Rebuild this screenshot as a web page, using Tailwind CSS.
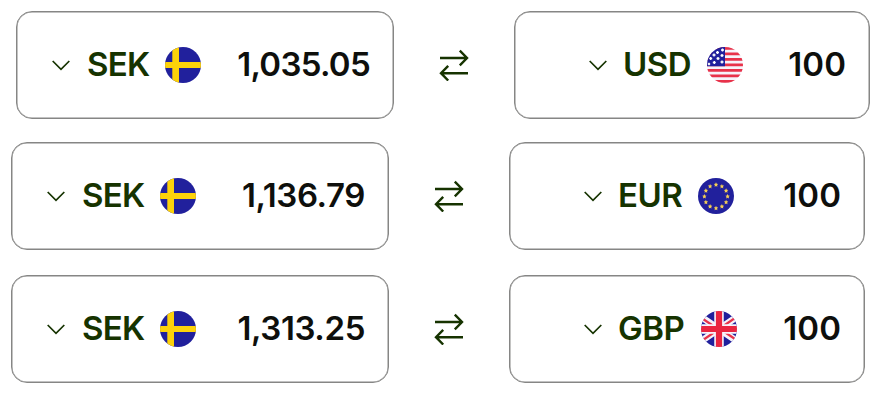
<!DOCTYPE html>
<html lang="en">
<head>
<meta charset="utf-8">
<title>Currency converter</title>
<script src="https://cdn.jsdelivr.net/npm/@tailwindcss/browser@4"></script>
</head>
<body class="bg-white font-['Inter',sans-serif] font-semibold text-[33px] leading-10 tracking-[-0.7px] text-[#0e0f0c]">
<svg class="hidden">
  <symbol id="chevron" viewBox="0 0 18 11"><path d="M.7 1 9 9.4 17.3 1" fill="none" stroke="#163300" stroke-width="1.700"/></symbol>
  <symbol id="swap" viewBox="0 0 30 32"><path d="M1 9H27.500M20.800 1.700 28 9 20.800 16.300M29 24.200H2.500M9.200 16.900 2 24.200 9.200 31.500" fill="none" stroke="#163300" stroke-width="2.400"/></symbol>
  <symbol id="se" viewBox="0 0 36 36"><path fill="#21209c" d="M0 0h36v36H0z"/><path fill="#fdd20a" d="M7.300 0h6.700v36H7.300zM0 15h36v6H0z"/></symbol>
  <symbol id="us" viewBox="0 0 36 36"><path fill="#f6f3fa" d="M0 0h36v36H0z"/><path d="M0 1.400h36M0 6.900h36M0 12.400h36M0 17.900h36M0 23.400h36M0 28.900h36M0 34.400h36" stroke="#e8324a" stroke-width="2.800"/><path fill="#21209c" d="M0 0h18v19.300H0z"/><path d="M9 5.500h3M10.500 4v3M14 3h3M15.500 1.500v3M5.500 8h3M7 6.500v3M13.500 8.500h3M15 7v3M2.200 11.500h3M3.700 10v3M9.500 11.500h3M11 10v3M5.800 15.500h3M7.300 14v3M13.500 15h3M15 13.500v3M.8 17h2.400M2 15.800v2.400" stroke="#fff" stroke-width="1.400"/></symbol>
  <symbol id="eu" viewBox="0 0 36 36"><path d="M0 0h36v36H0z" fill="#21209c"/><g fill="#f5cf55">
    <path id="star" d="m18 4.300.7 1.500 1.500.2-1.100 1.100.3 1.700-1.400-.8-1.400.8.3-1.700L15.800 6l1.500-.2z"/>
    <use href="#star" x="5.900" y="1.600"/><use href="#star" x="10.100" y="5.900"/><use href="#star" x="11.600" y="11.700"/><use href="#star" x="10.100" y="17.500"/><use href="#star" x="5.900" y="21.800"/><use href="#star" y="23.400"/><use href="#star" x="-5.900" y="21.800"/><use href="#star" x="-10.100" y="17.500"/><use href="#star" x="-11.600" y="11.700"/><use href="#star" x="-10.100" y="5.900"/><use href="#star" x="-5.900" y="1.600"/></g></symbol>
  <symbol id="gb" viewBox="0 0 36 36"><path fill="#21209c" d="M0 0h36v36H0z"/><path d="m-4 3 44 30M-4 33 40 3" stroke="#f6f3fa" stroke-width="6.500"/><path d="M-4 3.800 18 18.800M18 18 40 3M40 32.200 18 17.200M18 18-4 33" stroke="#e8324a" stroke-width="2.300"/><path d="M18 0v36M0 18h36" stroke="#f6f3fa" stroke-width="9.500"/><path d="M18 0v36M0 18h36" stroke="#ea2540" stroke-width="6.200"/></symbol>
</svg>
<main class="flex flex-col pt-[11px]">
  <section class="flex items-center ml-4 mb-[23px]">
    <div class="flex items-center w-[378px] h-[108px] shrink-0 rounded-[16px] border border-[#868685] shadow-[inset_0_0_0_0.500px_#868685] pl-[35px] pr-[23px]">
      <svg class="w-[18px] h-[11px]"><use href="#chevron"/></svg>
      <span class="ml-[17px] w-[78px] pb-0.5 text-[#163300]">SEK</span>
      <svg class="size-9 rounded-full"><use href="#se"/></svg>
      <span class="ml-auto pb-0.5">1,035.05</span>
    </div>
    <svg class="w-[30px] h-8 mx-[45px] shrink-0"><use href="#swap"/></svg>
    <div class="flex items-center w-[356px] h-[108px] shrink-0 rounded-[16px] border border-[#868685] shadow-[inset_0_0_0_0.500px_#868685] pl-[74px] pr-[23px]">
      <svg class="w-[18px] h-[11px]"><use href="#chevron"/></svg>
      <span class="ml-4 w-[84px] pb-0.5 tracking-[-0.5px] text-[#163300]">USD</span>
      <svg class="size-9 rounded-full"><use href="#us"/></svg>
      <span class="ml-auto pb-0.5 tracking-[0.100px]">100</span>
    </div>
  </section>
  <section class="flex items-center ml-[11px] mb-[25px]">
    <div class="flex items-center w-[378px] h-[108px] shrink-0 rounded-[16px] border border-[#868685] shadow-[inset_0_0_0_0.500px_#868685] pl-[35px] pr-[23px]">
      <svg class="w-[18px] h-[11px]"><use href="#chevron"/></svg>
      <span class="ml-[17px] w-[78px] pb-0.5 text-[#163300]">SEK</span>
      <svg class="size-9 rounded-full"><use href="#se"/></svg>
      <span class="ml-auto pb-0.5 tracking-[-0.400px]">1,136.79</span>
    </div>
    <svg class="w-[30px] h-8 mx-[45px] shrink-0"><use href="#swap"/></svg>
    <div class="flex items-center w-[356px] h-[108px] shrink-0 rounded-[16px] border border-[#868685] shadow-[inset_0_0_0_0.500px_#868685] pl-[74px] pr-[23px]">
      <svg class="w-[18px] h-[11px]"><use href="#chevron"/></svg>
      <span class="ml-4 w-[80px] pb-0.5 tracking-[-0.5px] text-[#163300]">EUR</span>
      <svg class="size-9 rounded-full"><use href="#eu"/></svg>
      <span class="ml-auto pb-0.5 tracking-[0.100px]">100</span>
    </div>
  </section>
  <section class="flex items-center ml-[11px]">
    <div class="flex items-center w-[378px] h-[108px] shrink-0 rounded-[16px] border border-[#868685] shadow-[inset_0_0_0_0.500px_#868685] pl-[35px] pr-[23px]">
      <svg class="w-[18px] h-[11px]"><use href="#chevron"/></svg>
      <span class="ml-[17px] w-[78px] pb-0.5 text-[#163300]">SEK</span>
      <svg class="size-9 rounded-full"><use href="#se"/></svg>
      <span class="ml-auto pb-0.5 tracking-[-0.400px]">1,313.25</span>
    </div>
    <svg class="w-[30px] h-8 mx-[45px] shrink-0"><use href="#swap"/></svg>
    <div class="flex items-center w-[356px] h-[108px] shrink-0 rounded-[16px] border border-[#868685] shadow-[inset_0_0_0_0.500px_#868685] pl-[74px] pr-[23px]">
      <svg class="w-[18px] h-[11px]"><use href="#chevron"/></svg>
      <span class="ml-4 w-[83px] pb-0.5 tracking-[-0.5px] text-[#163300]">GBP</span>
      <svg class="size-9 rounded-full"><use href="#gb"/></svg>
      <span class="ml-auto pb-0.5 tracking-[0.100px]">100</span>
    </div>
  </section>
</main>
</body>
</html>
